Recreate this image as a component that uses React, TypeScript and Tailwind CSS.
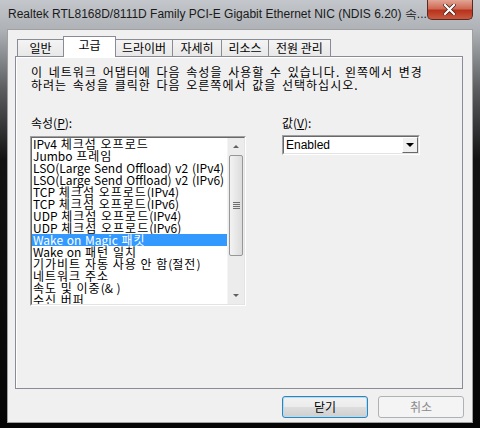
import React from 'react';

const tabs = [
  { label: '일반', w: 'w-[47px]' },
  { label: '고급', w: 'w-[53px]', active: true },
  { label: '드라이버', w: 'w-[58px]' },
  { label: '자세히', w: 'w-[50px]' },
  { label: '리소스', w: 'w-[48px]' },
  { label: '전원 관리', w: 'w-[63px]' },
];

const props = [
  'IPv4 체크섬 오프로드',
  'Jumbo 프레임',
  'LSO(Large Send Offload) v2 (IPv4)',
  'LSO(Large Send Offload) v2 (IPv6)',
  'TCP 체크섬 오프로드(IPv4)',
  'TCP 체크섬 오프로드(IPv6)',
  'UDP 체크섬 오프로드(IPv4)',
  'UDP 체크섬 오프로드(IPv6)',
  'Wake on Magic 패킷',
  'Wake on 패턴 일치',
  '기가비트 자동 사용 안 함(절전)',
  '네트워크 주소',
  '속도 및 이중(& )',
  '수신 버퍼',
];

// Gulim draws hangul on a 12px cell; widen the Noto glyphs a bit to match
function K({ text }: { text: string }) {
  const parts = text.split(/([\uAC00-\uD7A3]+)/);
  return (
    <>
      {parts.map((p, i) =>
        /[\uAC00-\uD7A3]/.test(p) ? (
          <span key={i} className="inline-block tracking-[1px]">
            {p}
          </span>
        ) : (
          <React.Fragment key={i}>{p}</React.Fragment>
        )
      )}
    </>
  );
}

function ScrollBar() {
  return (
    <div className="w-[17px] h-full flex flex-col bg-[#ececec] border-l border-[#f4f4f4]">
      <div className="h-[17px] flex items-center justify-center">
        <div className="w-0 h-0 border-l-[3px] border-r-[3px] border-b-[3px] border-l-transparent border-r-transparent border-b-[#606060]" />
      </div>
      <div className="h-[101px] mx-[1px] rounded-[2px] border border-[#979797] bg-gradient-to-r from-[#f3f3f3] to-[#dcdcdc] flex flex-col items-center justify-center gap-[1px]">
        <div className="w-[7px] h-[1px] bg-[#6f6f6f]" />
        <div className="w-[7px] h-[1px] bg-[#6f6f6f]" />
        <div className="w-[7px] h-[1px] bg-[#6f6f6f]" />
        <div className="w-[7px] h-[1px] bg-[#6f6f6f]" />
      </div>
      <div className="flex-1" />
      <div className="h-[17px] flex items-center justify-center">
        <div className="w-0 h-0 border-l-[3px] border-r-[3px] border-t-[3px] border-l-transparent border-r-transparent border-t-[#606060]" />
      </div>
    </div>
  );
}

export default function App() {
  return (
    <div className="w-[480px] h-[428px] overflow-hidden flex flex-col bg-[linear-gradient(180deg,#c3c7cb_0px,#aeb2b6_30px,#5a5c5e_90px,#121212_160px,#050505_428px)] font-['Noto_Sans_CJK_KR',sans-serif] text-black">
      {/* Title bar */}
      <div className="h-[29px] flex items-start justify-between">
        <div className="pl-[8px] pt-[6px] text-[12px] leading-[16px] font-['Liberation_Sans',sans-serif] text-[#1a1a1a] whitespace-nowrap">
          Realtek RTL8168D/8111D Family PCI-E Gigabit Ethernet NIC (NDIS 6.20) 속...
        </div>
        <div className="mr-[7px] w-[47px] h-[20px] rounded-b-[5px] border border-t-0 border-[#5a2a22] bg-[linear-gradient(180deg,#e2a595_0%,#cf6a55_45%,#b8321c_55%,#c75a40_100%)] flex items-center justify-center">
          <svg width="13" height="11" viewBox="0 0 13 11">
            <path d="M2 1 L11 10 M11 1 L2 10" stroke="#3a1a14" strokeWidth="3.6" strokeLinecap="square" />
            <path d="M2 1 L11 10 M11 1 L2 10" stroke="#ffffff" strokeWidth="2.2" strokeLinecap="square" />
          </svg>
        </div>
      </div>

      {/* Client */}
      <div className="ml-[7px] w-[466px] h-[394px] border border-[#a0a0a0] bg-[#f0f0f0] flex flex-col">
        {/* Tabs */}
        <div className="h-[26px] pt-[6px] pl-[9px] flex items-end">
          {tabs.map((t, i) => (
            <div
              key={t.label}
              className={
                t.active
                  ? `${t.w} h-[21px] -mb-[1px] ${i > 0 ? '-ml-[1px]' : ''} relative z-10 border border-b-0 border-[#898c95] bg-white flex justify-center pt-[1px] text-[12px] leading-[14px]`
                  : `${t.w} h-[17px] ${i > 0 ? '-ml-[1px]' : ''} border border-b-0 border-[#898c95] bg-gradient-to-b from-[#f4f4f4] to-[#e8e8e8] flex justify-center pt-[1px] text-[12px] leading-[14px]`
              }
            >
              {t.label}
            </div>
          ))}
        </div>

        {/* Panel */}
        <div className="ml-[7px] w-[448px] h-[333px] border border-[#898c95] bg-[#f0f0f0] shadow-[inset_1px_1px_0_#ffffff] pl-[15px] pt-[8px]">
          <div className="text-[12px] leading-[13px] whitespace-nowrap [word-spacing:3px]">
            <div>
              <K text="이 네트워크 어댑터에 다음 속성을 사용할 수 있습니다. 왼쪽에서 변경" />
            </div>
            <div>
              <K text="하려는 속성을 클릭한 다음 오른쪽에서 값을 선택하십시오." />
            </div>
          </div>

          <div className="mt-[25px] flex gap-[36px]">
            {/* Left column */}
            <div className="-ml-[1px] w-[216px]">
              <div className="pl-[1px] text-[12px] leading-[13px] h-[20px]">
                속성(<span className="underline">P</span>):
              </div>
              <div className="h-[170px] border border-t-[#a0a0a0] border-l-[#a0a0a0] border-r-white border-b-white">
                <div className="h-full border border-t-[#696969] border-l-[#696969] border-r-[#e3e3e3] border-b-[#e3e3e3] bg-white flex overflow-hidden">
                  <div className="flex-1 flex flex-col overflow-hidden">
                    {props.map((p, i) => (
                      <div
                        key={p}
                        className={`h-[12px] shrink-0 text-[12px] leading-[12px] pl-[1px] whitespace-nowrap [word-spacing:1px] ${
                          i === 8 ? 'bg-[#3399ff] text-white' : 'text-black'
                        }`}
                      >
                        <K text={p} />
                      </div>
                    ))}
                  </div>
                  <ScrollBar />
                </div>
              </div>
            </div>

            {/* Right column */}
            <div className="w-[138px]">
              <div className="text-[12px] leading-[13px] h-[19px]">
                값(<span className="underline">V</span>):
              </div>
              <div className="h-[20px] border border-t-[#a0a0a0] border-l-[#a0a0a0] border-r-white border-b-white">
                <div className="h-full border border-t-[#696969] border-l-[#696969] border-r-[#e3e3e3] border-b-[#e3e3e3] bg-white flex items-center justify-between">
                  <span className="pl-[2px] text-[12px] leading-[14px] font-['Liberation_Sans',sans-serif]">Enabled</span>
                  <div className="w-[16px] h-[16px] bg-[#f0f0f0] border border-t-white border-l-white border-r-[#696969] border-b-[#696969] flex items-center justify-center">
                    <div className="w-0 h-0 border-l-[4px] border-r-[4px] border-t-[4px] border-l-transparent border-r-transparent border-t-black" />
                  </div>
                </div>
              </div>
            </div>
          </div>
        </div>

        {/* Buttons */}
        <div className="mt-[7px] pr-[8px] flex justify-end gap-[10px]">
          <button className="w-[86px] h-[22px] rounded-[3px] border border-[#3c7fb1] bg-[linear-gradient(180deg,#f2f2f2_0%,#ebebeb_50%,#dddddd_51%,#cfcfcf_100%)] shadow-[inset_0_0_0_1px_#a8e0f8] text-[12px] leading-[14px]">
            닫기
          </button>
          <button className="w-[86px] h-[22px] rounded-[3px] border border-[#adb2b5] bg-[#f4f4f4] text-[12px] leading-[14px] text-[#8b8b8b]">
            취소
          </button>
        </div>
      </div>
    </div>
  );
}
